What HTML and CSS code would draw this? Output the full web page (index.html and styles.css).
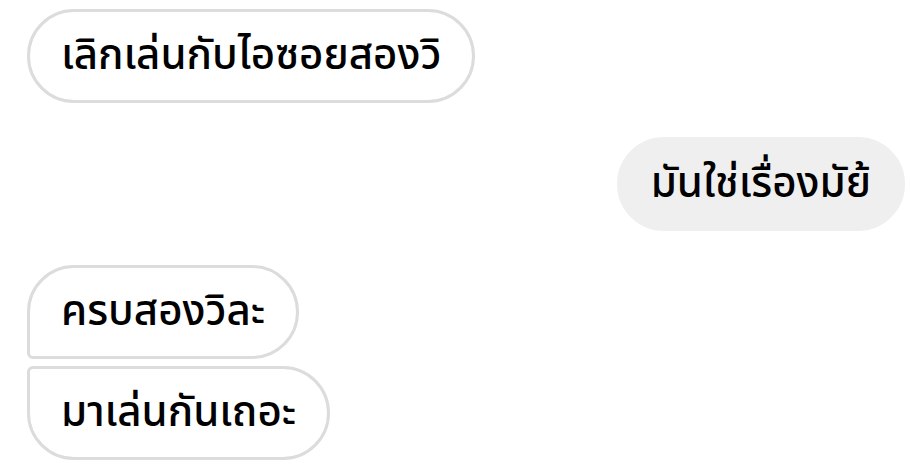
FILE: index.html
```html
<!DOCTYPE html>
<html lang="th">
<head>
<meta charset="utf-8">
<link rel="stylesheet" href="styles.css">
</head>
<body>
<div class="chat">
  <div class="group">
    <div class="bubble in">เลิกเล่นกับไอซอยสองวิ</div>
  </div>
  <div class="group out-group">
    <div class="bubble out">มันใช่เรื่องมัย้</div>
  </div>
  <div class="group">
    <div class="bubble in first">ครบสองวิละ</div>
    <div class="bubble in last">มาเล่นกันเถอะ</div>
  </div>
</div>
</body>
</html>
```
FILE: styles.css
```css
html, body {
  margin: 0;
  padding: 0;
  background: #ffffff;
}
.chat {
  display: flex;
  flex-direction: column;
  gap: 34px;
  padding: 9px 7px 0 27px;
  font-family: "Noto Sans Thai", "Noto Sans Thai UI", "Noto Sans", sans-serif;
  font-size: 42px;
  font-weight: 500;
  color: #000;
}
.group {
  display: flex;
  flex-direction: column;
  align-items: flex-start;
  gap: 7px;
}
.out-group {
  align-items: flex-end;
}
.bubble {
  box-sizing: border-box;
  height: 94px;
  display: flex;
  align-items: center;
  padding: 0 31px;
  border-radius: 47px;
  line-height: 1;
  white-space: nowrap;
}
.in {
  border: 3px solid #dcdcdc;
  background: #fff;
}
.out {
  background: #efefef;
  border: 3px solid #efefef;
}
.in.first {
  border-bottom-left-radius: 6px;
}
.in.last {
  border-top-left-radius: 6px;
}
```
